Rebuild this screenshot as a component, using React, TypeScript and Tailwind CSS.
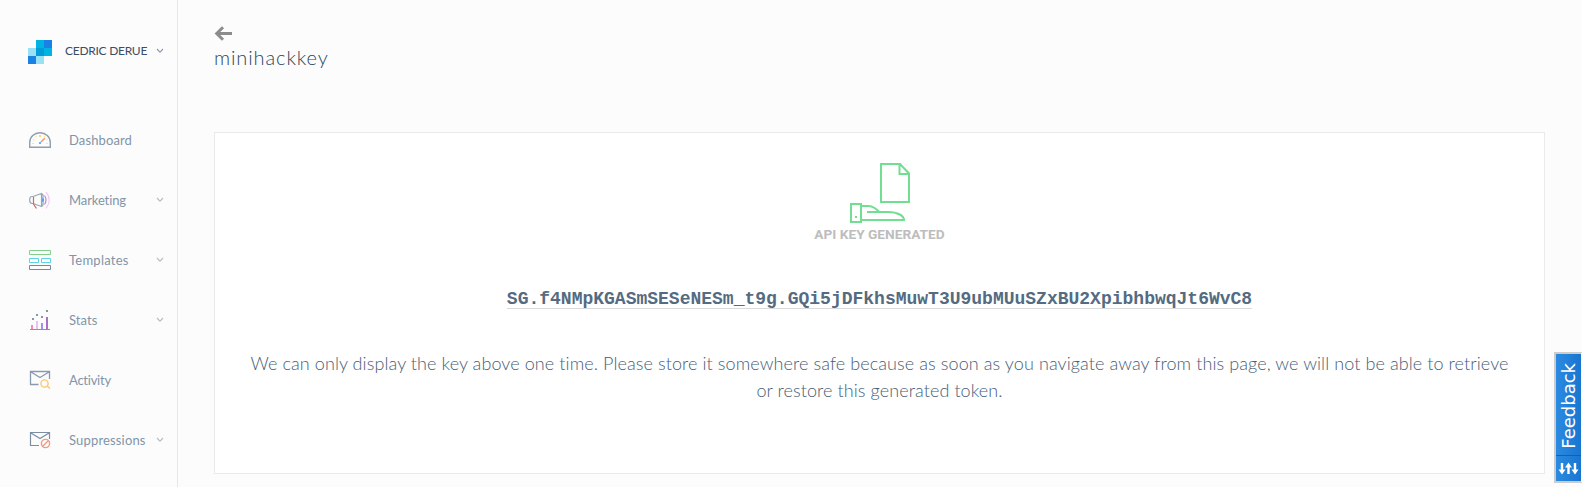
import type { ReactNode } from "react";

const icons: Record<string, ReactNode> = {
  Dashboard: (
    <>
      <path d="M1.700 19.300V14.500a10.300 9.800 0 0 1 20.600 0V19.300Z" stroke="#8f9fb0" strokeWidth="1.400" />
      <path d="M4 15.500H6M18 15.500H20M5 11.500L6.500 12.200M7.500 8L8.500 9M16 9L17 8M18.500 12L19.500 11.500" stroke="#fbe59c" strokeWidth="1.200" />
      <rect x="11" y="7" width="2" height="2" fill="#fbdc78" />
      <path d="M13 14L16.800 10.200" stroke="#f58d72" strokeWidth="1.400" />
      <rect x="11" y="14" width="2" height="2" fill="#6fb1ea" />
    </>
  ),
  Marketing: (
    <>
      <path d="M5 8.500H4Q1.700 8.500 1.700 12T4 15.500H5L13.500 18.500V5.500L5 8.500ZM13.500 5.500L15 7V17L13.500 18.500" stroke="#97a5b5" strokeWidth="1.200" />
      <path d="M5.500 9V16L8.500 20.500" stroke="#dd6464" strokeWidth="1.200" />
      <path d="M15 10.500V13.500" stroke="#4fa3e8" strokeWidth="2" />
      <path d="M16.500 7.500Q19.500 12 16.500 16.500" stroke="#b98ad8" strokeWidth="1.200" />
      <path d="M18 4Q24.500 12 18 20.500" stroke="#efcdf2" strokeWidth="1.200" />
    </>
  ),
  Templates: (
    <>
      <path d="M1.500 2.500H22.500V6.500H1.500Z" stroke="#84d18b" />
      <path d="M1.500 10.500H10.500V14.500H1.500ZM13.500 10.500H22.500V14.500H13.500Z" stroke="#5dd3e6" />
      <path d="M1.500 17.500H22.500V21.500H1.500Z" stroke="#7488a0" />
    </>
  ),
  Stats: (
    <>
      <rect x="3" y="17" width="2" height="4" fill="#fb8ab0" />
      <rect x="8" y="13" width="2" height="8" fill="#e5c3ee" />
      <rect x="13" y="15" width="2" height="6" fill="#a68bfa" />
      <rect x="18" y="9" width="2" height="12" fill="#a86fcb" />
      <path d="M4 10h2v2H4ZM8 6h2v2H8ZM13 8h2v2H13ZM18 2h2v2H18ZM2 21h20v1H2Z" fill="#8496a9" />
    </>
  ),
  Activity: (
    <>
      <path d="M21.500 11V3.500H2.500V16.500H10.500M3 4L12 9.500L21 4" stroke="#8a9aad" strokeWidth="1.300" />
      <circle cx="16.500" cy="15.500" r="3.600" stroke="#f9c773" strokeWidth="1.400" />
      <path d="M19.200 18L22 20.500" stroke="#f9c773" strokeWidth="1.500" />
    </>
  ),
  Suppressions: (
    <>
      <path d="M21.500 11V4.500H2.500V17.500H11M3 5L12 10.500L21 5" stroke="#7b8ea4" strokeWidth="1.200" />
      <circle cx="17.500" cy="15.500" r="4.100" stroke="#f09a84" strokeWidth="1.400" />
      <path d="M14.700 18.300L20.300 12.700" stroke="#f09a84" strokeWidth="1.300" />
    </>
  ),
};

const Chevron = ({ color = "#b3bdc9" }: { color?: string }) => (
  <svg width="8" height="6" viewBox="0 0 8 6" fill="none" className="shrink-0">
    <path d="M1 1L4 4.200L7 1" stroke={color} strokeWidth="1.100" />
  </svg>
);

const items = [
  { label: "Dashboard", menu: false, track: "tracking-[0.12px]" },
  { label: "Marketing", menu: true, track: "tracking-[-0.1px]" },
  { label: "Templates", menu: true, track: "tracking-[0.24px]" },
  { label: "Stats", menu: true, track: "tracking-[0.05px]" },
  { label: "Activity", menu: false, track: "tracking-[-0.24px]" },
  { label: "Suppressions", menu: true, track: "tracking-[0.16px]" },
];

function Sidebar() {
  return (
    <aside className="flex h-full w-[178px] shrink-0 flex-col border-r border-[#e6e7e9]">
      <div className="mt-8 flex h-10 items-center pl-7 pr-[13px]">
        <svg width="24" height="24" viewBox="0 0 3 3" shapeRendering="crispEdges">
          <path d="M0 1h1v1H0ZM1 2h1v1H1Z" fill="#99e1f4" />
          <path d="M0 2h1v1H0ZM2 0h1v1H2Z" fill="#1a82e2" />
          <path d="M1 0h1v1H1ZM2 1h1v1H2Z" fill="#00b3e3" />
          <path d="M1 1h1v1H1Z" fill="#009dd9" />
        </svg>
        <span className="ml-[13px] flex-1 whitespace-nowrap pb-0.5 text-[12px] leading-4 tracking-[-0.27px] text-[#3b4d66]">CEDRIC DERUE</span>
        <span className="flex pb-0.5"><Chevron color="#8d9bad" /></span>
      </div>
      <nav className="mt-[38px]">
        {items.map((item) => (
          <a key={item.label} className="flex h-[60px] items-center pl-7 pr-[13px]">
            <svg width="24" height="24" viewBox="0 0 24 24" fill="none" className="shrink-0">
              {icons[item.label]}
            </svg>
            <span className={"ml-[17px] flex-1 whitespace-nowrap text-[13px] leading-4 text-[#8394a8] " + item.track}>{item.label}</span>
            {item.menu && <Chevron />}
          </a>
        ))}
      </nav>
    </aside>
  );
}

export default function App() {
  return (
    <div className="relative flex h-[487px] w-[1582px] overflow-hidden bg-[#fcfcfc] font-['Lato','Noto_Sans',sans-serif]">
      <Sidebar />
      <main className="flex flex-1 flex-col pl-9 pr-[37px] pt-[26px]">
        <svg width="19" height="15" viewBox="0 0 19 15" fill="none">
          <path d="M18 7.500H3.500M9 1.200L2.700 7.500L9 13.800" stroke="#8c8c8c" strokeWidth="3" />
        </svg>
        <h1 className="mt-1 h-6 whitespace-nowrap text-[20px] font-light leading-6 tracking-[0.9px] text-[#294661]">minihackkey</h1>
        <section className="mt-[63px] flex h-[342px] flex-col items-center border border-[#e9eaeb] bg-white">
          <svg width="60" height="60" viewBox="0 0 60 60" fill="none" stroke="#72de92" strokeWidth="2" className="mt-[30px]">
            <path d="M31 1H50L59 10.500V39H31ZM49.500 1V11H59" />
            <path d="M1 41H11V59H1ZM11 43H18C24 43 26 46 29.500 49M17 49H38C48 49 54 53 54 57H11" />
            <rect x="5" y="53" width="2" height="2" fill="#72de92" stroke="none" />
          </svg>
          <div className="mt-[3px] whitespace-nowrap font-['Roboto',sans-serif] text-[13.700px] font-bold leading-4 text-[#bdbdbd]">API KEY GENERATED</div>
          <div className="mt-[47px] h-[20px] whitespace-nowrap border-b border-[#dadada] font-['Liberation_Mono',monospace] text-[18px] font-bold leading-5 text-[#546b81]">
            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
          </div>
          <p className="mt-[41px] whitespace-nowrap text-center text-[18px] font-light leading-[27px] tracking-[0.093px] text-[#465e76]">
            We can only display the key above one time. Please store it somewhere safe because as soon as you navigate away from this page, we will not be able to retrieve
            <br />
            or restore this generated token.
          </p>
        </section>
      </main>
      <button className="absolute right-0 top-[352px] flex h-[131px] w-[28px] flex-col items-center border-2 border-r border-[#cccccc] border-r-white bg-linear-to-r from-[#2b8ae2] to-[#1976d0] text-white">
        <span className="flex h-[102px] w-full items-center justify-center border-b border-[#1261ad] pt-[3px]">
          <span className="rotate-180 whitespace-nowrap font-['DejaVu_Sans',sans-serif] text-[18px] leading-6 [writing-mode:vertical-rl]">Feedback</span>
        </span>
        <svg width="21" height="25" viewBox="0 0 21 25" fill="none" stroke="white" strokeWidth="2.400">
          <path d="M4 7V15M10.500 18V11M17 7V15" />
          <path d="M0.500 13.500h7l-3.500 5ZM7 11.500h7l-3.500-5ZM13.500 13.500h7l-3.500 5Z" fill="white" stroke="none" />
        </svg>
      </button>
    </div>
  );
}
